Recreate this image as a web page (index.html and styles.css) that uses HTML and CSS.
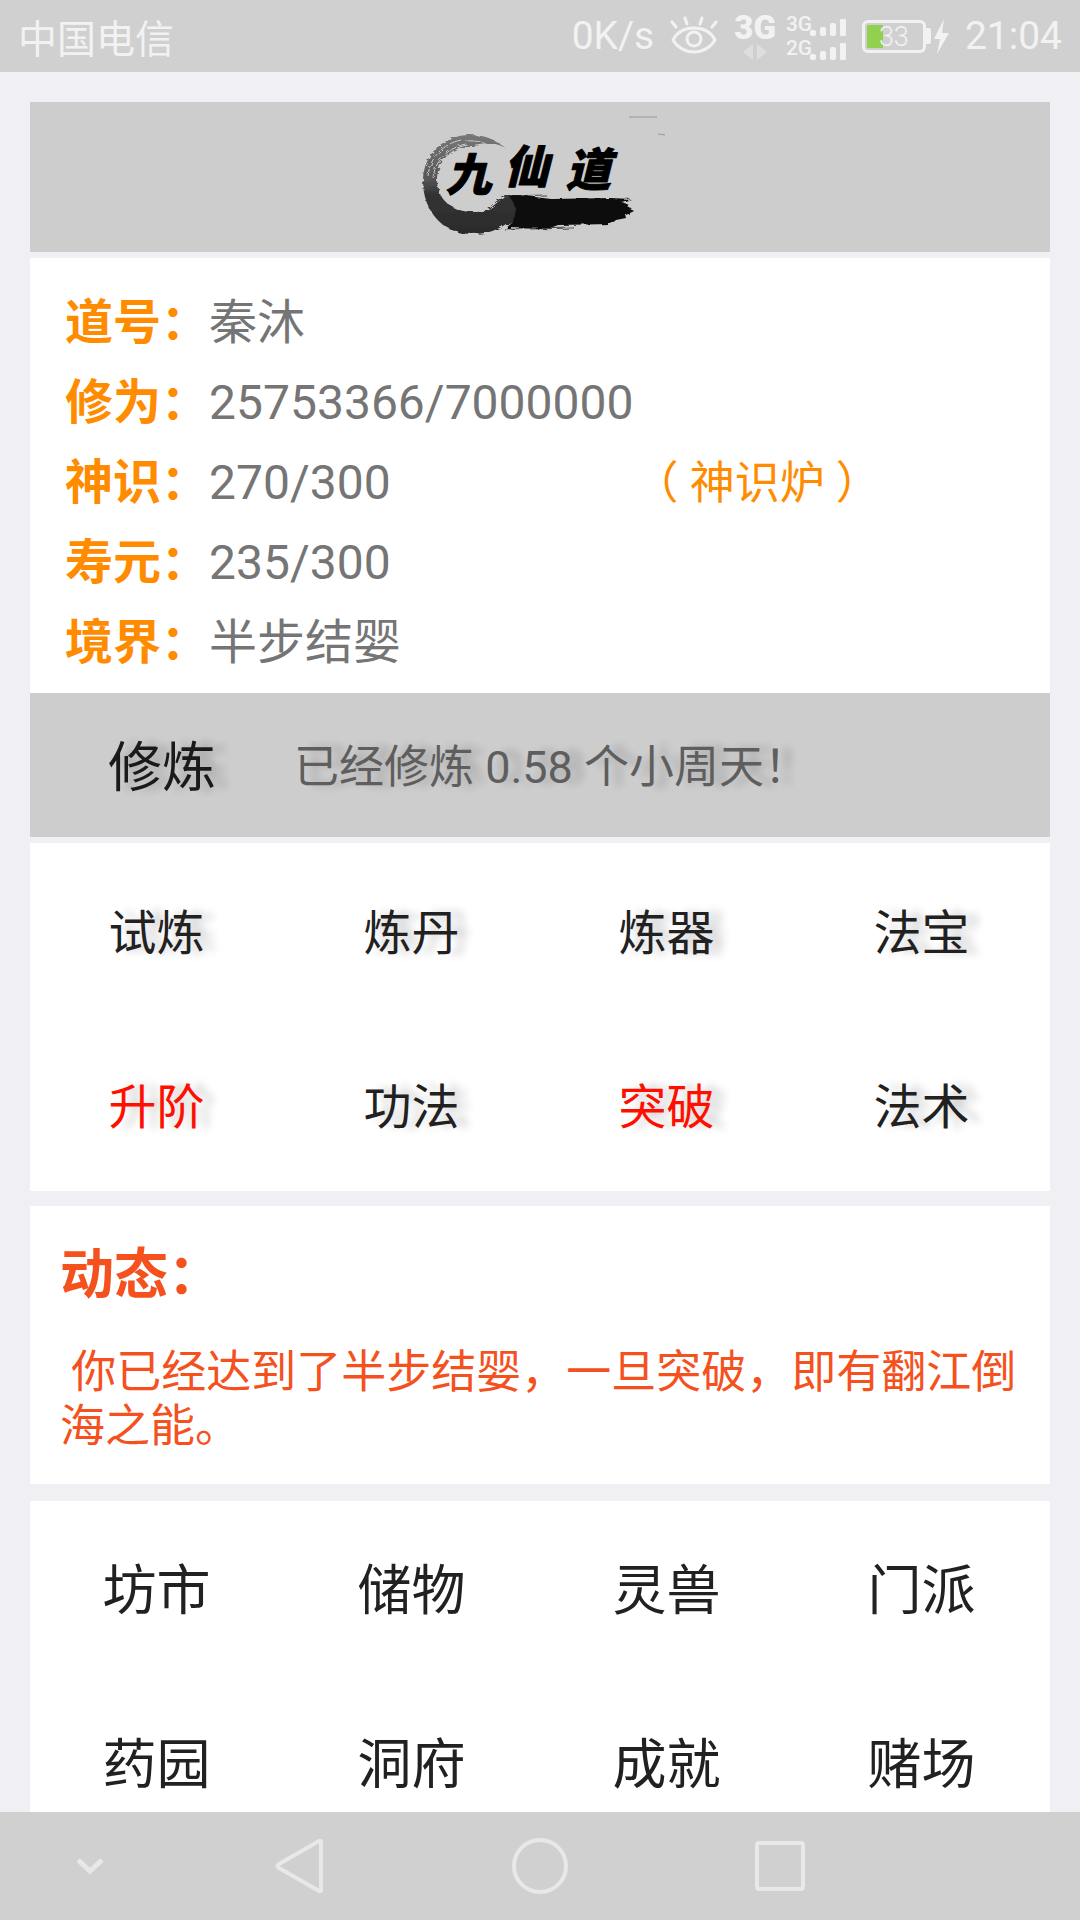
FILE: index.html
```html
<!DOCTYPE html>
<html lang="zh-CN">
<head>
    <meta charset="UTF-8">
    <meta name="viewport" content="width=device-width, initial-scale=1.0">
    <title>九仙道</title>
    <link rel="stylesheet" href="styles.css">
</head>
<body>
    <header class="status-bar">
        <span class="carrier">中国电信</span>
        <div class="status-right">
            <span>0K/s</span>
            <svg class="icon-eye" width="48" height="40" viewBox="0 0 48 40" fill="none" stroke="#f2f2f2" stroke-width="3" stroke-linecap="round">
                <path d="M3 24C7 16 15 12 24 12s17 4 21 12c-4 7-12 12-21 12S7 31 3 24z"/>
                <circle cx="24" cy="23" r="7"/>
                <path d="M6 11L2 6M17 8l-2-6M30 8l2-6M42 11l4-5"/>
            </svg>
            <div class="net-type">
                <strong>3G</strong>
                <svg width="24" height="16" viewBox="0 0 24 16" fill="#dedede"><path d="M10 0v16L0 8zM14 0v16l10-8z"/></svg>
            </div>
            <div class="signals">
                <div class="signal">
                    <span>3G</span>
                    <svg width="36" height="18" viewBox="0 0 36 18" fill="#f2f2f2"><rect y="12" width="6" height="6" rx="2"/><rect x="10" y="9" width="6" height="9" rx="2"/><rect x="20" y="5" width="6" height="13" rx="2"/><rect x="30" y="1" width="6" height="17" rx="1"/></svg>
                </div>
                <div class="signal">
                    <span>2G</span>
                    <svg width="36" height="18" viewBox="0 0 36 18" fill="#f2f2f2"><rect y="12" width="6" height="6" rx="2"/><rect x="10" y="9" width="6" height="9" rx="2"/><rect x="20" y="5" width="6" height="13" rx="2"/><rect x="30" y="1" width="6" height="17" rx="1"/></svg>
                </div>
            </div>
            <div class="battery">
                <span class="battery-body">33</span>
                <svg width="24" height="36" viewBox="0 0 24 36" fill="#f2f2f2"><path d="M0 10h3q2 0 2 2v12q0 2-2 2H0zM18 1L8 21h6l-3 15 12-21h-7z"/></svg>
            </div>
            <span class="clock">21:04</span>
        </div>
    </header>

    <main class="content">
        <div class="banner">
            <svg class="logo" width="280" height="150" viewBox="0 0 280 150" role="img" aria-label="九仙道">
                <defs>
                    <filter id="rough" x="-10%" y="-10%" width="120%" height="120%">
                        <feTurbulence type="fractalNoise" baseFrequency="0.08 0.3" numOctaves="3" seed="4" result="n"/>
                        <feDisplacementMap in="SourceGraphic" in2="n" scale="5"/>
                    </filter>
                    <linearGradient id="ink" x1="0" y1="0" x2="0" y2="1">
                        <stop offset="0" stop-color="#777"/>
                        <stop offset="0.45" stop-color="#555"/>
                        <stop offset="0.6" stop-color="#333"/>
                        <stop offset="1" stop-color="#2b2b2b"/>
                    </linearGradient>
                </defs>
                <g filter="url(#rough)">
                    <path fill="url(#ink)" d="M105 46C96 37 84 33 70 33 44 33 23 52 23 79c0 30 20 53 49 53 13 0 24-3 34-10 5 2 10-3 11-14s-3-16-12-15c-9 9-16 17-31 17-22 0-37-13-37-32 0-18 14-34 34-34 14 0 22-6 34 2z"/>
                    <path fill="none" stroke="#cdcdcd" d="M28 74C30 55 43 42 61 38M33 77C34 58 50 45 66 42M66 39c12-1 19 2 28 7M74 45l18 6"/>
                    <path fill="#0b0f0b" d="M107 93l20 1 24 3 60-1 20 1-9 3 7 3-1 2 5 3-8 4 1 4-10 2-5 4-53 1-10 4-42-1 6-5c6-8 4-22-5-28z"/>
                    <path fill="none" stroke="#444" d="M104 94l42-1M104 127l20 1M130 127l44-1"/>
                </g>
                <path fill="none" stroke="#999" d="M229 15h28M258 32l7 1"/>
                <g class="logo-text">
                    <text x="46" y="89">九</text>
                    <text x="104" y="81">仙</text>
                    <text x="166" y="84">道</text>
                </g>
            </svg>
        </div>

        <section class="panel profile">
            <table>
                <tr><th scope="row">道号：</th><td>秦沐</td><td></td></tr>
                <tr><th scope="row">修为：</th><td>25753366/7000000</td><td></td></tr>
                <tr><th scope="row">神识：</th><td>270/300</td><td><a href="#">（ 神识炉 ）</a></td></tr>
                <tr><th scope="row">寿元：</th><td>235/300</td><td></td></tr>
                <tr><th scope="row">境界：</th><td>半步结婴</td><td></td></tr>
            </table>
        </section>

        <div class="practice">
            <a href="#">修炼</a>
            <span>已经修炼 0.58 个小周天！</span>
        </div>

        <nav class="panel menu menu-skill">
            <a href="#">试炼</a>
            <a href="#">炼丹</a>
            <a href="#">炼器</a>
            <a href="#">法宝</a>
            <a href="#" class="hot">升阶</a>
            <a href="#">功法</a>
            <a href="#" class="hot">突破</a>
            <a href="#">法术</a>
        </nav>

        <section class="panel news">
            <h2>动态：</h2>
            <p>&nbsp;你已经达到了半步结婴，一旦突破，即有翻江倒海之能。</p>
        </section>

        <nav class="panel menu menu-place">
            <a href="#">坊市</a>
            <a href="#">储物</a>
            <a href="#">灵兽</a>
            <a href="#">门派</a>
            <a href="#">药园</a>
            <a href="#">洞府</a>
            <a href="#">成就</a>
            <a href="#">赌场</a>
        </nav>
    </main>

    <footer class="nav-bar">
        <button type="button" aria-label="收起">
            <svg width="28" height="18" viewBox="0 0 28 18"><path d="M2 3l12 11L26 3" stroke-width="5"/></svg>
        </button>
        <button type="button" aria-label="返回">
            <svg width="50" height="56" viewBox="0 0 50 56"><path d="M46 4v48q0 2-2 1L4 30q-3-2 0-4L44 3q2-1 2 1z"/></svg>
        </button>
        <button type="button" aria-label="主页">
            <svg width="56" height="56" viewBox="0 0 56 56"><circle cx="28" cy="28" r="26"/></svg>
        </button>
        <button type="button" aria-label="最近任务">
            <svg width="50" height="50" viewBox="0 0 50 50"><rect x="2" y="2" width="46" height="46" rx="2"/></svg>
        </button>
    </footer>
</body>
</html>
```
FILE: styles.css
```css
* {
    box-sizing: border-box;
}
body {
    font-family: Roboto, "Noto Sans CJK SC", sans-serif;
    background-color: #efeff4;
    color: #212121;
    margin: 0;
    height: 100vh;
    display: flex;
    flex-direction: column;
}
a {
    color: inherit;
    text-decoration: none;
}
svg {
    display: block;
    flex: none;
}

/* 状态栏 */
.status-bar {
    flex: none;
    display: flex;
    justify-content: space-between;
    align-items: center;
    height: 72px;
    padding: 0 18px;
    background-color: #d0d0d0;
    color: #f2f2f2;
    font-size: 39px;
}
.status-right {
    display: flex;
    align-items: center;
}
.icon-eye {
    margin: 0 16px;
}
.net-type {
    display: flex;
    flex-direction: column;
    align-items: center;
    font-size: 33px;
    line-height: 32px;
    margin-right: 10px;
}
.net-type strong {
    font-weight: 900;
}
.signals {
    font-size: 21px;
    font-weight: 500;
    line-height: 24px;
}
.signal {
    display: flex;
    align-items: flex-end;
}
.signal span {
    width: 24px;
}
.battery {
    display: flex;
    align-items: center;
    margin: 0 15px 0 16px;
}
.battery-body {
    width: 64px;
    height: 33px;
    border: 3px solid #f2f2f2;
    border-radius: 6px;
    padding: 2px;
    background: linear-gradient(to right, #92d050 16px, transparent 16px) content-box no-repeat;
    font-size: 27px;
    font-weight: 300;
    line-height: 24px;
    text-align: center;
}

/* 主体 */
.content {
    flex: 1;
    min-height: 0;
    overflow-y: auto;
    scrollbar-width: none;
    padding: 30px 30px 0;
}
.banner {
    display: flex;
    justify-content: center;
    background-color: #cdcdcd;
    margin-bottom: 6px;
}
.logo-text {
    font-size: 45px;
    font-weight: 900;
    font-style: italic;
    fill: #000;
    stroke: #000;
    stroke-width: 1px;
    stroke-linejoin: round;
}
.panel {
    background-color: #fff;
}
.profile {
    padding: 25px 35px 10px;
}
.profile table {
    border-collapse: collapse;
    font-size: 48px;
    line-height: 78px;
}
.profile th,
.profile td {
    padding: 0;
    height: 80px;
    text-align: left;
    white-space: nowrap;
}
.profile th {
    color: #ff8c00;
}
.profile td {
    color: #757575;
}
.profile td a {
    color: #ff8c00;
    font-size: 45px;
}
.practice {
    display: flex;
    align-items: center;
    height: 144px;
    padding: 0 0 3px 78px;
    margin-bottom: 6px;
    background-color: #cdcdcd;
    text-shadow: 12px 0 8px rgba(0, 0, 0, 0.2);
}
.practice a {
    color: #1a1a1a;
    font-size: 54px;
    width: 186px;
}
.practice span {
    color: #5e5e5e;
    font-size: 45px;
}
.menu {
    display: grid;
    grid-template-columns: repeat(4, 1fr);
    grid-auto-rows: 174px;
}
.menu a {
    display: flex;
    justify-content: center;
    align-items: center;
    padding: 0 2px 3px 0;
}
.menu-skill {
    font-size: 48px;
    text-shadow: 12px 0 8px rgba(0, 0, 0, 0.2);
}
.menu-skill .hot {
    color: #ff0f00;
}
.menu-place {
    font-size: 54px;
}
.news {
    color: #f4511e;
    padding: 30px;
    margin: 15px 0 17px;
}
.news h2 {
    font-size: 54px;
    line-height: 80px;
    margin: 0 0 30px;
}
.news p {
    font-size: 45px;
    line-height: 54px;
    margin: 0;
}

/* 导航栏 */
.nav-bar {
    flex: none;
    display: grid;
    grid-template-columns: 3fr 4fr 4fr 4fr 3fr;
    align-items: center;
    height: 108px;
    background-color: #d0d0d0;
}
.nav-bar button {
    display: flex;
    justify-content: center;
    background: none;
    border: 0;
    padding: 0;
    cursor: pointer;
}
.nav-bar svg {
    fill: none;
    stroke: #e8e8e8;
    stroke-width: 4;
}
```
